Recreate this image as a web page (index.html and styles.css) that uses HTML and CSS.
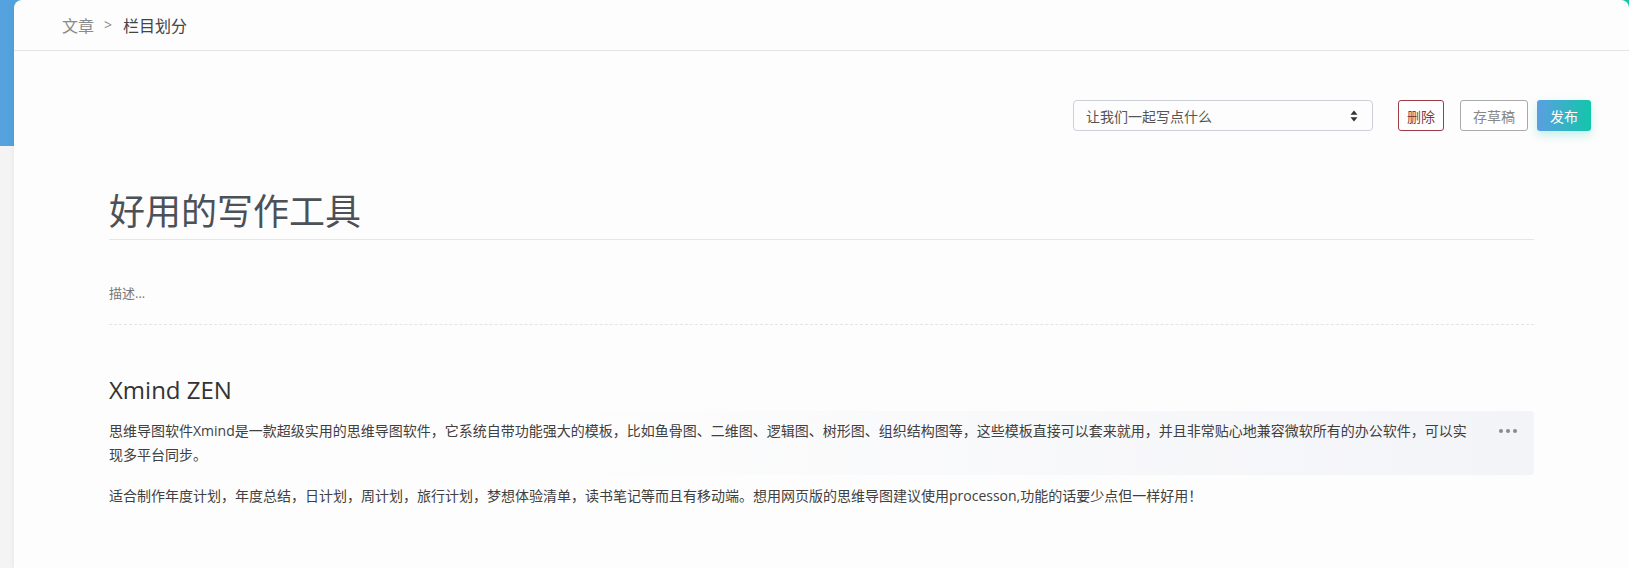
FILE: index.html
```html
<!DOCTYPE html>
<html lang="zh-CN">
<head>
    <meta charset="UTF-8">
    <title>写文章</title>
    <link rel="stylesheet" href="styles.css">
</head>
<body>
<div class="page">
    <div class="crumbs">
        <span class="crumb">文章</span>
        <span class="crumb-sep">&gt;</span>
        <span class="crumb crumb-current">栏目划分</span>
    </div>

    <div class="toolbar">
        <div class="column-select">
            <span>让我们一起写点什么</span>
            <svg class="caret" width="8" height="12" viewBox="0 0 8 12">
                <path d="M4 0.5 L7.5 4.8 L0.5 4.8 Z M4 11.5 L7.5 7.2 L0.5 7.2 Z" fill="#333"/>
            </svg>
        </div>
        <button class="btn btn-delete">删除</button>
        <button class="btn btn-draft">存草稿</button>
        <button class="btn btn-publish">发布</button>
    </div>

    <div class="editor">
        <div class="title">好用的写作工具</div>
        <div class="desc">描述...</div>

        <div class="content">
            <h2 class="content-h">Xmind ZEN</h2>
            <div class="block block-active">
                <p>思维导图软件Xmind是一款超级实用的思维导图软件，它系统自带功能强大的模板，比如鱼骨图、二维图、逻辑图、树形图、组织结构图等，这些模板直接可以套来就用，并且非常贴心地兼容微软所有的办公软件，可以实现多平台同步。</p>
                <div class="more">
                    <i></i><i></i><i></i>
                </div>
            </div>
            <div class="block">
                <p>适合制作年度计划，年度总结，日计划，周计划，旅行计划，梦想体验清单，读书笔记等而且有移动端。想用网页版的思维导图建议使用processon,功能的话要少点但一样好用！</p>
            </div>
        </div>
    </div>
</div>
</body>
</html>
```

FILE: styles.css
```css
/* 重置默认样式 */
* {
    margin: 0;
    padding: 0;
    box-sizing: border-box;
}
body {
    font-family: "Open Sans", "Noto Sans CJK SC", sans-serif;
    color: #333;
    background: linear-gradient(90deg, #55a2de, #13c5ab) top left / 100% 146px no-repeat, #f4f4f4;
    min-height: 100vh;
}
.page {
    margin-left: 14px;
    min-height: 100vh;
    background-color: #fdfdfd;
    border-radius: 8px 8px 0 0;
    box-shadow: -2px 0 4px rgba(0, 0, 0, 0.04);
}
.crumbs {
    display: flex;
    align-items: center;
    height: 51px;
    padding: 0 0 1px 48px;
    border-bottom: 1px solid #e4e4e4;
    font-size: 16px;
}
.crumb {
    color: #8a8a8a;
}
.crumb-sep {
    margin: 0 11px 0 10px;
    color: #8a8a8a;
    font-size: 14px;
}
.crumb-current {
    color: #444;
}
.toolbar {
    display: flex;
    justify-content: flex-end;
    align-items: center;
    margin-top: 49px;
    padding-right: 38px;
}
.column-select {
    display: flex;
    align-items: center;
    justify-content: space-between;
    width: 300px;
    height: 31px;
    padding: 0 14px 0 12px;
    border: 1px solid #cdd1d7;
    border-radius: 4px;
    font-size: 14px;
    color: #555;
    margin-right: 25px;
}
.btn {
    height: 31px;
    font-family: inherit;
    font-size: 14px;
    background: #fff;
    border-radius: 3px;
    cursor: pointer;
}
.btn-delete {
    padding: 0 8px;
    border: 1px solid #9b3c46;
    color: #85393f;
    margin-right: 16px;
}
.btn-draft {
    padding: 0 12px;
    border: 1px solid #aaa;
    color: #888;
    margin-right: 9px;
}
.btn-publish {
    padding: 0 13px;
    border: none;
    color: #fff;
    background: linear-gradient(90deg, #5c9ee1, #12c6aa);
    box-shadow: 0 4px 10px rgba(18, 198, 170, 0.25);
}
.editor {
    padding: 0 95px;
}
.title {
    margin-top: 54px;
    height: 55px;
    line-height: 54px;
    font-size: 36px;
    color: #4b5157;
    border-bottom: 1px solid #e6e6e6;
}
.desc {
    padding: 43px 0 21px;
    line-height: 20px;
    font-size: 13px;
    color: #777;
    border-bottom: 1px dashed #e4e4e4;
}
.content-h {
    margin-top: 47px;
    line-height: 36px;
    font-size: 24px;
    font-weight: normal;
    color: #333;
}
.block {
    display: flex;
    align-items: flex-start;
    border-radius: 4px;
    font-size: 14px;
    line-height: 24px;
    color: #404040;
}
.block p {
    flex: 1;
}
.block-active {
    margin-top: 3px;
    padding: 8px 0;
    background: linear-gradient(90deg, rgba(243, 244, 248, 0) 30%, #f3f4f8);
}
.block-active + .block {
    margin-top: 9px;
}
.more {
    display: flex;
    align-items: center;
    gap: 3px;
    height: 24px;
    margin: 0 17px 0 30px;
}
.more i {
    width: 4px;
    height: 4px;
    border-radius: 50%;
    background-color: #8a8a8a;
}
```
